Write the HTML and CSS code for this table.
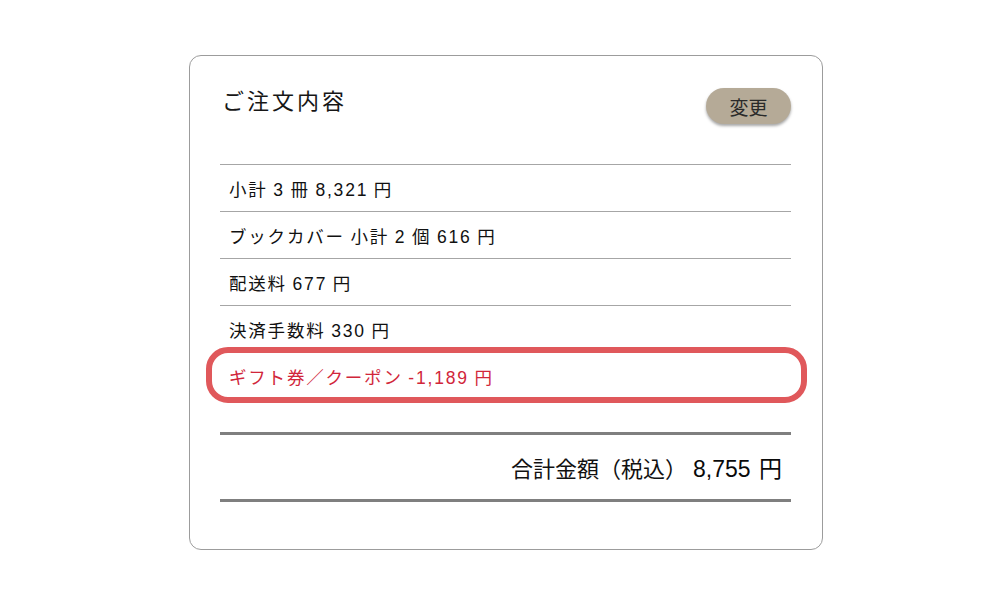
FILE: index.html
```html
<!DOCTYPE html>
<html lang="ja">
<head>
<meta charset="utf-8">
<title>ご注文内容</title>
<link rel="stylesheet" href="styles.css">
</head>
<body>
<div class="card">
  <div class="head">
    <h2 class="title">ご注文内容</h2>
    <button class="btn">変更</button>
  </div>
  <ul class="rows">
    <li class="row">小計 3 冊 8,321 円</li>
    <li class="row">ブックカバー 小計 2 個 616 円</li>
    <li class="row">配送料 677 円</li>
    <li class="row">決済手数料 330 円</li>
    <li class="row row-gift">ギフト券／クーポン -1,189 円</li>
  </ul>
  <div class="total">
    <span class="total-label">合計金額（税込）</span>
    <span class="total-amount">8,755 円</span>
  </div>
</div>
</body>
</html>
```

FILE: styles.css
```css
html, body {
  margin: 0;
  padding: 0;
  background: #ffffff;
}

body {
  font-family: "Liberation Sans", "Noto Sans CJK JP", sans-serif;
  color: #111111;
}

.card {
  box-sizing: border-box;
  width: 634px;
  height: 495px;
  margin: 55px 0 0 189px;
  border: 1px solid #9c9c9c;
  border-radius: 12px;
  padding: 0 31px 0 30px;
}

.head {
  box-sizing: border-box;
  height: 108px;
  padding-top: 32px;
  display: flex;
  justify-content: space-between;
  align-items: flex-start;
}

.title {
  margin: 0 0 0 2px;
  font-size: 22px;
  line-height: 28px;
  font-weight: normal;
  letter-spacing: 3px;
  color: #161616;
}

.btn {
  width: 85px;
  height: 36px;
  border: none;
  border-radius: 18px;
  background: #b5aa97;
  color: #2a2a2a;
  font-family: "Liberation Sans", "Noto Sans CJK JP", sans-serif;
  font-size: 19px;
  padding: 0;
  box-shadow: 0 2px 3px rgba(0, 0, 0, 0.35);
}

.rows {
  list-style: none;
  margin: 0;
  padding: 0;
}

.row {
  box-sizing: border-box;
  height: 47px;
  border-top: 1px solid #a6a6a6;
  display: flex;
  align-items: center;
  padding-left: 9px;
  font-size: 17.5px;
  letter-spacing: 1.8px;
  word-spacing: -1px;
  color: #111111;
}

.row-gift {
  position: relative;
  color: #d1263a;
}

.row-gift::after {
  content: "";
  position: absolute;
  left: -14px;
  right: -16px;
  top: -6px;
  bottom: -4px;
  border: 6.5px solid #e0585b;
  border-radius: 22px;
}

.total {
  box-sizing: border-box;
  height: 70px;
  margin-top: 33px;
  border-top: 3px solid #7f7f7f;
  border-bottom: 3px solid #7f7f7f;
  display: flex;
  justify-content: flex-end;
  align-items: center;
  gap: 6px;
  padding-right: 9px;
}

.total-label {
  font-size: 22px;
  color: #111111;
}

.total-amount {
  font-size: 23px;
  word-spacing: 2px;
  color: #0a0a0a;
}
```
